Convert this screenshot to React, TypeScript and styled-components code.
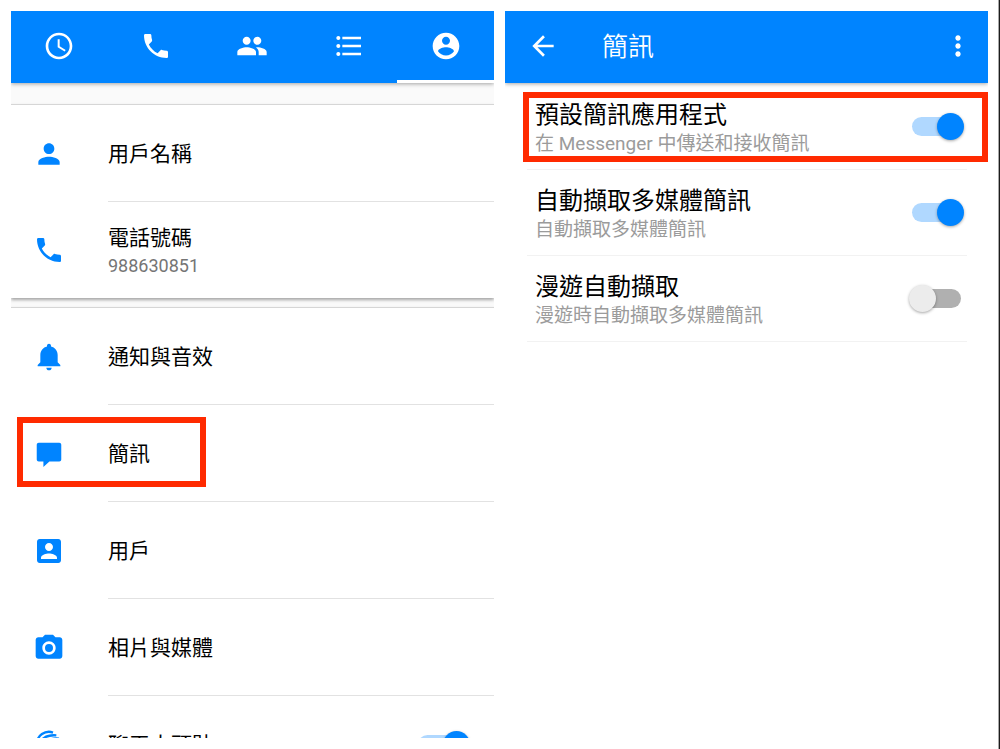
import React, { useState } from "react";
import styled, { createGlobalStyle, css } from "styled-components";

const BLUE = "#0084ff";
const RED = "#ff2a00";

const GlobalStyle = createGlobalStyle`
  *, *::before, *::after { box-sizing: border-box; }
  body {
    margin: 0;
    background: #fff;
    color: #000;
    font-family: Roboto, "Noto Sans CJK TC", sans-serif;
  }
  button { font: inherit; color: inherit; background: none; border: 0; padding: 0; cursor: pointer; }
  h1, p, ul { margin: 0; padding: 0; font-weight: 400; list-style: none; }
`;

const Page = styled.div`
  display: grid;
  grid-template-columns: 1fr 1fr;
  gap: 11px;
  height: 100vh;
  padding: 11px;
  border-right: 1px solid #1c1c1c;
  box-shadow: inset -1px 0 #a8a8a8;
  overflow: hidden;
`;

const Pane = styled.section`
  display: flex;
  flex-direction: column;
  min-width: 0;
  min-height: 0;
  overflow: hidden;
`;

const barStyle = css`
  position: relative;
  z-index: 1;
  flex: none;
  display: flex;
  height: 72px;
  background: ${BLUE};
  color: #fff;
  box-shadow: 0 1px 4px rgba(0, 0, 0, 0.35);
`;

const TabBar = styled.nav`
  ${barStyle}
`;

const Tab = styled.button<{ $active?: boolean }>`
  flex: 1;
  display: flex;
  align-items: center;
  justify-content: center;
  border-bottom: 3px solid ${(p) => (p.$active ? "#fff" : "transparent")};
`;

const TitleBar = styled.header`
  ${barStyle}
  align-items: center;
  padding: 0 14px 3px 22px;
`;

const Title = styled.h1`
  flex: 1;
  margin-left: 43px;
  padding-top: 2px;
  font-size: 26px;
  line-height: 32px;
  font-weight: 350;
`;

const IconButton = styled.button`
  display: flex;
`;

const Glyph = styled.svg`
  flex: none;
  display: block;
  width: 32px;
  height: 32px;
  fill: currentColor;
`;

const Groups = styled.div`
  flex: 1;
  display: flex;
  flex-direction: column;
  gap: 9px;
  min-height: 0;
  padding-top: 21px;
  background: #fafafa;
`;

const Group = styled.ul`
  flex: none;
  border-top: 1px solid #d6d6d6;
  background: #fff;
  box-shadow: 0 2px 3px rgba(0, 0, 0, 0.34);
`;

const MenuItem = styled.li`
  position: relative;
  display: flex;
  align-items: center;
  gap: 43px;
  padding-left: 22px;
  color: ${BLUE};
`;

const MenuBody = styled.div`
  flex: 1;
  display: flex;
  align-items: center;
  height: 97px;
  padding-right: 24px;
  border-bottom: 1px solid #e2e2e2;
  color: #000;

  ${MenuItem}:last-child & {
    height: 96px;
    border-bottom: 0;
  }
`;

const MenuButton = styled.button`
  flex: 1;
  padding-top: 3px;
  text-align: left;
`;

const MenuLabel = styled.label`
  flex: 1;
  padding-top: 3px;
`;

const MenuTitle = styled.span`
  display: block;
  font-size: 21px;
  line-height: 27px;
`;

const MenuDetail = styled.span`
  display: block;
  font-size: 18px;
  line-height: 27px;
  color: #757575;
`;

const Highlight = styled.span<{ $wide?: boolean }>`
  position: absolute;
  top: ${(p) => (p.$wide ? 8 : 12)}px;
  left: ${(p) => (p.$wide ? -4 : 6)}px;
  ${(p) => (p.$wide ? "right: -21px;" : "width: 189px;")}
  height: 70px;
  border: 6px solid ${RED};
  pointer-events: none;
`;

const Settings = styled.ul`
  padding: 1px 21px 0 22px;
`;

const Setting = styled.li`
  position: relative;
  display: flex;
  align-items: center;
  height: 86px;
  padding: 0 3px 0 8px;
  border-bottom: 1px solid #f2f2f2;
`;

const SettingLabel = styled.label`
  flex: 1;
  padding-top: 4px;
`;

const SettingTitle = styled.span`
  display: block;
  font-size: 24px;
  line-height: 30px;
`;

const SettingDetail = styled.span`
  display: block;
  font-size: 19px;
  line-height: 27px;
  color: #9b9b9b;
`;

const Switch = styled.input.attrs({ type: "checkbox", role: "switch" })`
  appearance: none;
  flex: none;
  position: relative;
  width: 55px;
  height: 27px;
  margin: 0;
  cursor: pointer;

  &::before {
    content: "";
    position: absolute;
    inset: 4px 3px;
    border-radius: 10px;
    background: #b0b0b0;
  }

  &::after {
    content: "";
    position: absolute;
    top: 0;
    left: 0;
    width: 27px;
    height: 27px;
    border-radius: 50%;
    background: #ececec;
    box-shadow: 0 1px 3px rgba(0, 0, 0, 0.35);
  }

  &:checked::before { background: #b0d8ff; }
  &:checked::after { left: 28px; background: ${BLUE}; }
`;

const PATHS = {
  clock:
    "M11.99 2C6.47 2 2 6.48 2 12s4.47 10 9.99 10C17.52 22 22 17.52 22 12S17.52 2 11.99 2zM12 20c-4.42 0-8-3.58-8-8s3.58-8 8-8 8 3.58 8 8-3.58 8-8 8zM12.5 7H11v6l5.25 3.15.75-1.23-4.5-2.67z",
  phone:
    "M6.62 10.79c1.44 2.83 3.76 5.14 6.59 6.59l2.2-2.2c.27-.27.67-.36 1.02-.24 1.12.37 2.33.57 3.57.57.55 0 1 .45 1 1V20c0 .55-.45 1-1 1-9.39 0-17-7.61-17-17 0-.55.45-1 1-1h3.5c.55 0 1 .45 1 1 0 1.25.2 2.45.57 3.57.11.35.03.74-.25 1.02l-2.2 2.2z",
  people:
    "M16 11c1.66 0 2.99-1.34 2.99-3S17.66 5 16 5c-1.66 0-3 1.34-3 3s1.34 3 3 3zm-8 0c1.66 0 2.99-1.34 2.99-3S9.66 5 8 5C6.34 5 5 6.34 5 8s1.34 3 3 3zm0 2c-2.33 0-7 1.17-7 3.5V19h14v-2.5c0-2.33-4.67-3.5-7-3.5zm8 0c-.29 0-.62.02-.97.05 1.16.84 1.97 1.97 1.97 3.45V19h6v-2.5c0-2.33-4.67-3.5-7-3.5z",
  list:
    "M4 10.5c-.83 0-1.5.67-1.5 1.5s.67 1.5 1.5 1.5 1.5-.67 1.5-1.5-.67-1.5-1.5-1.5zm0-6c-.83 0-1.5.67-1.5 1.5S3.17 7.5 4 7.5 5.5 6.83 5.5 6 4.83 4.5 4 4.5zm0 12c-.83 0-1.5.68-1.5 1.5s.68 1.5 1.5 1.5 1.5-.68 1.5-1.5-.67-1.5-1.5-1.5zM7 19h14v-2H7v2zm0-6h14v-2H7v2zm0-8v2h14V5H7z",
  account:
    "M12 2C6.48 2 2 6.48 2 12s4.48 10 10 10 10-4.48 10-10S17.52 2 12 2zm0 3c1.66 0 3 1.34 3 3s-1.34 3-3 3-3-1.34-3-3 1.34-3 3-3zm0 14.2c-2.5 0-4.71-1.28-6-3.22.03-1.99 4-3.08 6-3.08 1.99 0 5.97 1.09 6 3.08-1.29 1.94-3.5 3.22-6 3.22z",
  back: "M20 11H7.83l5.59-5.59L12 4l-8 8 8 8 1.41-1.41L7.83 13H20v-2z",
  more:
    "M12 8c1.1 0 2-.9 2-2s-.9-2-2-2-2 .9-2 2 .9 2 2 2zm0 2c-1.1 0-2 .9-2 2s.9 2 2 2 2-.9 2-2-.9-2-2-2zm0 6c-1.1 0-2 .9-2 2s.9 2 2 2 2-.9 2-2-.9-2-2-2z",
  person:
    "M12 12c2.21 0 4-1.79 4-4s-1.79-4-4-4-4 1.79-4 4 1.79 4 4 4zm0 2c-2.67 0-8 1.34-8 4v2h16v-2c0-2.66-5.33-4-8-4z",
  bell:
    "M12 22c1.1 0 2-.9 2-2h-4c0 1.1.9 2 2 2zm6.5-6v-5.5c0-3.07-2.13-5.64-5-6.32V3.5c0-.83-.67-1.5-1.5-1.5s-1.5.67-1.5 1.5v.68c-2.87.68-5 3.25-5 6.32V16l-2 2v1h17v-1l-2-2z",
  bubble:
    "M4.3 3.5h15.4c.83 0 1.5.67 1.5 1.5v11.2c0 .83-.67 1.5-1.5 1.5h-7.4L7.8 21.7v-4H4.3c-.83 0-1.5-.67-1.5-1.5V5c0-.83.67-1.5 1.5-1.5z",
  contact:
    "M3 5v14c0 1.1.89 2 2 2h14c1.1 0 2-.9 2-2V5c0-1.1-.9-2-2-2H5c-1.11 0-2 .9-2 2zm12 4c0 1.66-1.34 3-3 3s-3-1.34-3-3 1.34-3 3-3 3 1.34 3 3zm-9 8c0-2 4-3.1 6-3.1s6 1.1 6 3.1v1H6v-1z",
  camera:
    "M12 9a3 3 0 1 0 0 6 3 3 0 0 0 0-6zM9 2L7.17 4H4c-1.1 0-2 .9-2 2v12c0 1.1.9 2 2 2h16c1.1 0 2-.9 2-2V6c0-1.1-.9-2-2-2h-3.17L15 2H9zm3 15c-2.76 0-5-2.24-5-5s2.24-5 5-5 5 2.24 5 5-2.24 5-5 5z",
};

type IconName = keyof typeof PATHS | "chatHeads";

function Icon({ name }: { name: IconName }) {
  return (
    <Glyph viewBox="0 0 24 24" aria-hidden="true">
      {name === "chatHeads" ? (
        <g fill="none" stroke="currentColor" strokeWidth="1.8">
          <path d="M2.9 12A9.1 9.1 0 0 1 15 3.4" />
          <path d="M5 13.500C5.200 8.500 9.500 4.900 17.500 5.500" />
          <path d="M7.500 15.500C8 10.800 12 7.300 19.500 8" />
          <path d="M10 17.500c1-4 4.500-6.500 11-6" />
        </g>
      ) : (
        <path d={PATHS[name]} />
      )}
    </Glyph>
  );
}

const TABS: { icon: IconName; label: string }[] = [
  { icon: "clock", label: "最近" },
  { icon: "phone", label: "通話" },
  { icon: "people", label: "聯絡人" },
  { icon: "list", label: "群組" },
  { icon: "account", label: "個人檔案" },
];

interface Entry {
  icon: IconName;
  title: string;
  detail?: string;
  marked?: boolean;
  toggle?: boolean;
}

const GROUPS: Entry[][] = [
  [
    { icon: "person", title: "用戶名稱" },
    { icon: "phone", title: "電話號碼", detail: "988630851" },
  ],
  [
    { icon: "bell", title: "通知與音效" },
    { icon: "bubble", title: "簡訊", marked: true },
    { icon: "contact", title: "用戶" },
    { icon: "camera", title: "相片與媒體" },
    { icon: "chatHeads", title: "聊天大頭貼", toggle: true },
  ],
];

const SETTINGS = [
  { id: "default-sms", title: "預設簡訊應用程式", detail: "在 Messenger 中傳送和接收簡訊", on: true, marked: true },
  { id: "auto-mms", title: "自動擷取多媒體簡訊", detail: "自動擷取多媒體簡訊", on: true },
  { id: "roaming-mms", title: "漫遊自動擷取", detail: "漫遊時自動擷取多媒體簡訊", on: false },
];

export default function App() {
  const [tab, setTab] = useState(4);

  return (
    <>
      <GlobalStyle />
      <Page>
        <Pane>
          <TabBar>
            {TABS.map((t, i) => (
              <Tab key={t.icon} $active={i === tab} aria-label={t.label} onClick={() => setTab(i)}>
                <Icon name={t.icon} />
              </Tab>
            ))}
          </TabBar>
          <Groups>
            {GROUPS.map((entries, g) => (
              <Group key={g}>
                {entries.map((e) => (
                  <MenuItem key={e.title}>
                    <Icon name={e.icon} />
                    <MenuBody>
                      {e.toggle ? (
                        <>
                          <MenuLabel htmlFor={e.icon}>
                            <MenuTitle>{e.title}</MenuTitle>
                          </MenuLabel>
                          <Switch id={e.icon} defaultChecked />
                        </>
                      ) : (
                        <MenuButton>
                          <MenuTitle>{e.title}</MenuTitle>
                          {e.detail && <MenuDetail>{e.detail}</MenuDetail>}
                        </MenuButton>
                      )}
                    </MenuBody>
                    {e.marked && <Highlight />}
                  </MenuItem>
                ))}
              </Group>
            ))}
          </Groups>
        </Pane>

        <Pane>
          <TitleBar>
            <IconButton aria-label="返回">
              <Icon name="back" />
            </IconButton>
            <Title>簡訊</Title>
            <IconButton aria-label="更多選項">
              <Icon name="more" />
            </IconButton>
          </TitleBar>
          <Settings>
            {SETTINGS.map((s) => (
              <Setting key={s.id}>
                <SettingLabel htmlFor={s.id}>
                  <SettingTitle>{s.title}</SettingTitle>
                  <SettingDetail>{s.detail}</SettingDetail>
                </SettingLabel>
                <Switch id={s.id} defaultChecked={s.on} />
                {s.marked && <Highlight $wide />}
              </Setting>
            ))}
          </Settings>
        </Pane>
      </Page>
    </>
  );
}
